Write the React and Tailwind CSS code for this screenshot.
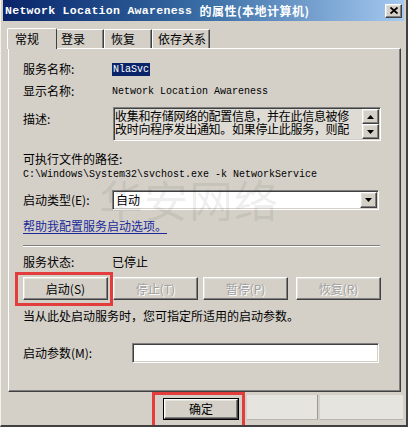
import React from 'react';

const cjk = { fontFamily: '"SimSun", "Noto Sans CJK SC", sans-serif' };
const mono = { fontFamily: '"Liberation Mono", "Noto Sans CJK SC", monospace' };

// classic raised 3D button
const raised =
  'border border-t-white border-l-white border-r-[#404040] border-b-[#404040] shadow-[inset_-1px_-1px_0_#808080,inset_1px_1px_0_#e4e2dc] bg-[#d4d0c8]';
// classic sunken field
const sunken =
  'border border-t-[#808080] border-l-[#808080] border-r-white border-b-white shadow-[inset_1px_1px_0_#404040,inset_-1px_-1px_0_#d4d0c8]';

const Label = ({ children }) => <div className="w-[89px] shrink-0">{children}</div>;

const SmallArrowBtn = ({ down }) => (
  <div className={`w-[17px] h-[15px] flex items-center justify-center ${raised}`}>
    <svg width="7" height="4" viewBox="0 0 7 4">
      {down ? <path d="M0 0h7L3.5 4z" fill="#000" /> : <path d="M0 4h7L3.5 0z" fill="#000" />}
    </svg>
  </div>
);

const ActionButton = ({ label, disabled }) => (
  <div
    className={`w-[85px] h-[23px] flex items-center justify-center text-[12px] ${raised} ${
      disabled ? 'text-[#a0a0a0] [text-shadow:1px_1px_0_#ffffff]' : 'text-black'
    }`}
  >
    {label}
  </div>
);

const App = () => {
  return (
    <div
      className="relative w-[408px] h-[427px] bg-[#d4d0c8] overflow-hidden text-[12px] text-black border-l border-l-[#f4f2ee] border-r-2 border-r-[#404040] border-b-2 border-b-[#404040]"
      style={cjk}
    >
      {/* Title bar */}
      <div className="h-[21px] mx-[2px] flex items-center justify-between bg-gradient-to-r from-[#0a246a] via-[#3a6ea5] to-[#a6caf0] px-[2px]">
        <div className="text-white font-bold text-[12px] whitespace-nowrap leading-none flex items-center">
          <span style={mono} className="text-[11.5px] tracking-[0.3px]">Network Location Awareness&nbsp;</span>
          <span style={cjk} className="tracking-[0.5px]">的属性(本地计算机)</span>
        </div>
        <div className={`w-[17px] h-[14px] flex items-center justify-center ${raised}`}>
          <svg width="8" height="7" viewBox="0 0 8 7">
            <path d="M0.5 0.5L7.5 6.5M7.5 0.5L0.5 6.5" stroke="#000" strokeWidth="1.8" />
          </svg>
        </div>
      </div>

      {/* Tabs */}
      <div className="flex items-end h-[27px] pl-[6px]">
        <div className="h-[21px] w-[50px] pl-[7px] flex items-center border-t border-l border-t-white border-l-white border-r border-r-[#404040] rounded-t-[2px] relative z-10 bg-[#d4d0c8] -mb-px">
          常规
        </div>
        <div className="h-[19px] w-[47px] pl-[4px] flex items-center border-t border-t-white border-r border-r-[#404040] shadow-[inset_-1px_0_0_#808080]">
          登录
        </div>
        <div className="h-[19px] w-[48px] pl-[6px] flex items-center border-t border-l border-t-white border-l-white border-r border-r-[#404040] shadow-[inset_-1px_0_0_#808080]">
          恢复
        </div>
        <div className="h-[19px] w-[58px] pl-[5px] flex items-center border-t border-l border-t-white border-l-white border-r border-r-[#404040] shadow-[inset_-1px_0_0_#808080]">
          依存关系
        </div>
      </div>

      {/* Panel */}
      <div className="relative ml-[7px] w-[393px] h-[344px] border-t border-l border-t-white border-l-white border-r border-b border-r-[#404040] border-b-[#404040] shadow-[inset_-1px_-1px_0_#808080] pl-[14px] pt-[12px] flex flex-col">
        {/* watermark */}
        <div className="absolute left-[90px] top-[128px] text-[44px] text-[#000000]/[0.08] tracking-[1px] pointer-events-none select-none leading-none z-20" style={cjk}>
          华安网络
        </div>

        <div className="h-[16px] flex items-center">
          <Label>服务名称:</Label>
          <span style={mono} className="text-[10px] bg-[#0a246a] text-white px-[1px] leading-[13px]">NlaSvc</span>
        </div>

        <div className="h-[16px] flex items-center mt-[6px]">
          <Label>显示名称:</Label>
          <span style={mono} className="text-[10px]">Network Location Awareness</span>
        </div>

        <div className="flex mt-[8px]">
          <div className="w-[90px] shrink-0 pt-[3px]">描述:</div>
          <div className={`w-[268px] h-[34px] flex bg-[#dedbd4] ${sunken}`}>
            <div className="flex-1 pl-[1px] pt-[2px] leading-[12.5px] tracking-[-0.3px] overflow-hidden">
              <div className="whitespace-nowrap">收集和存储网络的配置信息，并在此信息被修</div>
              <div className="whitespace-nowrap">改时向程序发出通知。如果停止此服务，则配</div>
            </div>
            <div className="flex flex-col w-[17px] mr-[1px] mt-[1px]">
              <SmallArrowBtn />
              <SmallArrowBtn down />
            </div>
          </div>
        </div>

        <div className="h-[16px] flex items-center mt-[10px]">可执行文件的路径:</div>
        <div className="h-[14px] flex items-center">
          <span style={mono} className="text-[10px]">C:\Windows\System32\svchost.exe -k NetworkService</span>
        </div>

        <div className="flex items-center mt-[9px]">
          <Label>启动类型(E):</Label>
          <div className={`w-[267px] h-[20px] flex items-center bg-white ${sunken}`}>
            <span className="flex-1 pl-[3px]">自动</span>
            <div className="mr-[1px]">
              <div className={`w-[17px] h-[16px] flex items-center justify-center ${raised}`}>
                <svg width="7" height="4" viewBox="0 0 7 4">
                  <path d="M0 0h7L3.5 4z" fill="#000" />
                </svg>
              </div>
            </div>
          </div>
        </div>

        <div className="h-[16px] flex items-center mt-[8px]">
          <span className="text-[#1a2a9c] underline underline-offset-2">帮助我配置服务启动选项。</span>
        </div>

        <div className="w-[357px] h-[2px] mt-[11px] border-t border-t-[#808080] border-b border-b-white" />

        <div className="h-[16px] flex items-center mt-[7px]">
          <Label>服务状态:</Label>
          <span>已停止</span>
        </div>

        <div className="flex items-center mt-[7px]">
          <div className="relative">
            <ActionButton label="启动(S)" />
            <div className="absolute -left-[8px] -top-[5px] -right-[5px] -bottom-[6px] border-[3px] border-[#e23c3c]" />
          </div>
          <div className="ml-[5px]">
            <ActionButton label="停止(T)" disabled />
          </div>
          <div className="ml-[5px]">
            <ActionButton label="暂停(P)" disabled />
          </div>
          <div className="ml-[8px]">
            <ActionButton label="恢复(R)" disabled />
          </div>
        </div>

        <div className="h-[16px] flex items-center mt-[8px]">当从此处启动服务时，您可指定所适用的启动参数。</div>

        <div className="flex items-center mt-[19px]">
          <div className="w-[109px] shrink-0">启动参数(M):</div>
          <div className={`w-[247px] h-[20px] bg-white ${sunken}`} />
        </div>
      </div>

      {/* Bottom buttons */}
      <div className="flex items-start mt-[6px] ml-[162px]">
        <div className="relative">
          <div className="w-[76px] h-[22px] flex items-center justify-center border border-black">
            <div className={`w-full h-full flex items-center justify-center ${raised}`}>确定</div>
          </div>
          <div className="absolute -left-[11px] -top-[6px] -right-[6px] -bottom-[12px] border-[3px] border-[#e23c3c]" />
        </div>
        <div className="ml-[8px] w-[71px] h-[25px] -mt-[3px] bg-[#e6e4df] border-r border-r-[#9a9892] border-b border-b-[#b8b6b0]" />
        <div className="ml-[2px] w-[83px] h-[25px] -mt-[3px] bg-[#e6e4df] border-b border-b-[#b8b6b0]" />
      </div>
    </div>
  );
};

export default App;
